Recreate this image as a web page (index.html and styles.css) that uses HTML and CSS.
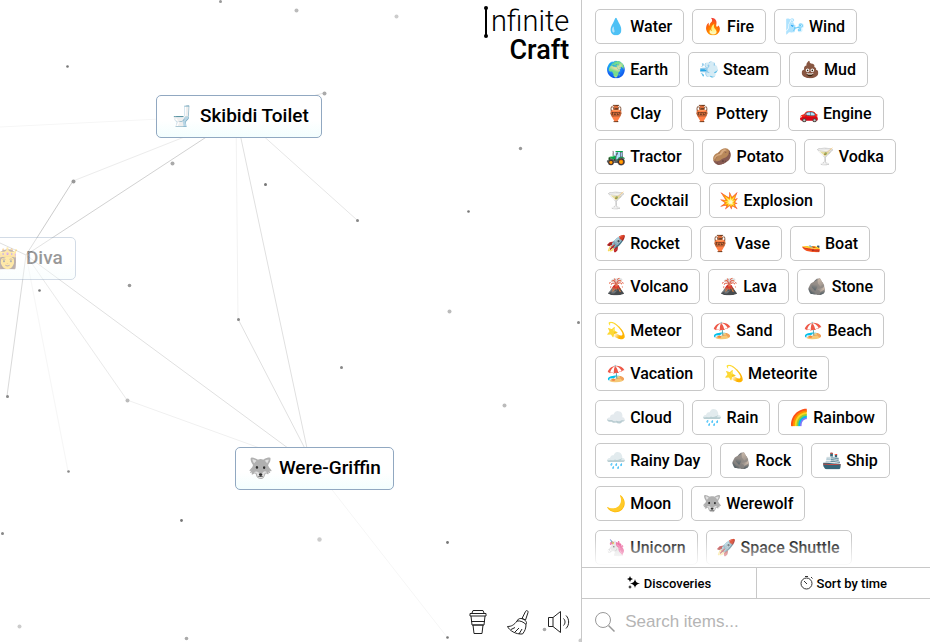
FILE: index.html
```html
<!DOCTYPE html>
<html lang="en">
<head>
    <meta charset="UTF-8">
    <meta name="viewport" content="width=device-width, initial-scale=1.0">
    <title>Infinite Craft</title>
    <link rel="stylesheet" href="styles.css">
</head>
<body>
    <div class="container">
        <main class="board">
            <svg class="particles" aria-hidden="true">
                <g id="lines"></g>
                <g id="dots" transform="translate(.5 .5)"></g>
            </svg>

            <h1 class="logo" aria-label="Infinite Craft">
                <span class="logo-top">
                    <svg class="logo-i" width="6" height="34" viewBox="0 0 6 34">
                        <path d="M3 3v28" stroke="#000" stroke-width="2"/>
                        <circle cx="3" cy="3" r="2"/>
                        <circle cx="3" cy="31" r="2"/>
                    </svg>nfinite
                </span>
                <span class="logo-bottom">Craft</span>
            </h1>

            <button type="button" class="instance skibidi"><span class="emoji">🚽</span>Skibidi Toilet</button>
            <button type="button" class="instance diva"><span class="emoji">👸</span>Diva</button>
            <button type="button" class="instance griffin"><span class="emoji">🐺</span>Were-Griffin</button>

            <div class="tools">
                <button type="button" class="tool" aria-label="Buy a coffee">
                    <svg width="24" height="26" viewBox="0 0 24 26">
                        <path d="M6 4l1-2.500h10l1 2.500M4 4.500h16v2.500H4zM5 7l1 9h12l1-9M5 12.500h14M6.500 16h11M7 16l1 8.500h8l1-8.500"/>
                    </svg>
                </button>
                <button type="button" class="tool" aria-label="Clear board">
                    <svg width="24" height="26" viewBox="0 0 24 26">
                        <path d="M19.500 2.500c.5-1.500 3-1 2.500 1l-2.500 7.500-3.500-1.500zM12.500 10c3-1.500 7 .5 8 3.500l-.5 2c-2.500-2.500-5.500-4-9-3.500zM11 12c-3 4-5.500 5.500-9.500 5.500 2 4 8 8 15 7.500 2.500-3 3.500-6 3.500-9.500M5 20.500l4-2M9 23l4-4M13 25l3-5"/>
                    </svg>
                </button>
                <button type="button" class="tool" aria-label="Toggle sound">
                    <svg width="24" height="26" viewBox="0 0 24 26">
                        <path d="M2.500 8.500H7v9H2.500zM7 8.500l7.500-6v21L7 17.500M17.500 9.500c2 2 2 5 0 7M20 6.500c3.500 3.500 3.500 9.500 0 13"/>
                    </svg>
                </button>
            </div>
        </main>

        <aside class="sidebar">
            <div class="items" id="items"></div>

            <div class="sidebar-controls">
                <button type="button" class="control">
                    <svg width="13" height="14" viewBox="0 0 13 14">
                        <path d="M8 3q.5 4 5 4.500-4.500.5-5 4.500-.5-4-5-4.500 4.500-.5 5-4.500zM3 0q.3 2.700 3 3-2.700.3-3 3-.3-2.700-3-3 2.700-.3 3-3zM3 9q.2 1.800 2 2-1.800.2-2 2-.2-1.800-2-2 1.800-.2 2-2z"/>
                    </svg>
                    Discoveries
                </button>
                <button type="button" class="control">
                    <svg width="13" height="14" viewBox="0 0 13 14" fill="none" stroke="#333">
                        <circle cx="6.500" cy="7.500" r="5.500"/>
                        <path d="M4 5l3 3M5 .5h3M11 1l1.500 1.500"/>
                    </svg>
                    Sort by time
                </button>
            </div>

            <label class="search">
                <svg width="20" height="20" viewBox="0 0 20 20" fill="none" stroke="#999">
                    <circle cx="8" cy="8" r="7.500"/>
                    <path d="M13.500 13.500l6 6" stroke-width="1.500"/>
                </svg>
                <input type="text" class="search-input" placeholder="Search items..." aria-label="Search items">
            </label>
        </aside>
    </div>

    <script src="script.js"></script>
</body>
</html>
```
FILE: styles.css
```css
* {
    box-sizing: border-box;
}
body {
    margin: 0;
    font-family: Roboto, "Noto Color Emoji", sans-serif;
    color: #000;
    background-color: #fff;
}
button {
    font-family: inherit;
    font-weight: 500;
    color: inherit;
    cursor: pointer;
}
.container {
    display: grid;
    grid-template-columns: minmax(0, 5fr) minmax(0, 3fr);
    height: 100vh;
}

/* board */
.board {
    position: relative;
    display: flex;
    flex-direction: column;
    justify-content: space-between;
    align-items: flex-end;
    overflow: hidden;
}
.particles {
    position: absolute;
    top: 0;
    left: 0;
    width: 100%;
    height: 100%;
}
.logo {
    display: flex;
    flex-direction: column;
    align-items: flex-end;
    margin: 5px 12px 0 0;
}
.logo-top {
    display: flex;
    gap: 2px;
    height: 32px;
    font-size: 29px;
    font-weight: 300;
    line-height: 32px;
}
.logo-bottom {
    font-size: 27px;
    font-weight: 500;
    line-height: 27px;
}
.instance {
    position: absolute;
    display: flex;
    align-items: center;
    gap: 6px;
    height: 43px;
    padding: 0 12px 2px;
    font-size: 19px;
    white-space: nowrap;
    background: linear-gradient(#fff 60%, #f3fefe);
    border: 1px solid #91a8c1;
    border-radius: 5px;
}
.instance .emoji {
    font-size: 20px;
}
.skibidi {
    top: 95px;
    left: 156px;
}
.diva {
    top: 237px;
    left: -18px;
    opacity: 0.4;
}
.griffin {
    top: 447px;
    left: 235px;
}
.tools {
    display: flex;
    gap: 16px;
    padding: 0 11px 7px 0;
}
.tool {
    display: flex;
    padding: 0;
    background: none;
    border: none;
}
.tool svg {
    fill: none;
    stroke: #222;
}

/* sidebar */
.sidebar {
    display: flex;
    flex-direction: column;
    min-height: 0;
    border-left: 1px solid #c8c8c8;
}
.items {
    position: relative;
    display: flex;
    flex: 1;
    flex-wrap: wrap;
    align-content: space-between;
    column-gap: 8px;
    min-height: 0;
    padding: 9px 20px 2px 13px;
    overflow: hidden;
}
.items::after {
    content: "";
    position: absolute;
    right: 0;
    bottom: 0;
    left: 0;
    height: 30px;
    background: linear-gradient(transparent, #fff);
}
.item {
    display: flex;
    align-items: center;
    gap: 4px;
    height: 35px;
    padding: 0 11px 0 10px;
    font-size: 16px;
    background-color: #fff;
    border: 1px solid #c8c8c8;
    border-radius: 5px;
}
.sidebar-controls {
    display: flex;
    border-top: 1px solid #c8c8c8;
    border-bottom: 1px solid #c8c8c8;
}
.control {
    display: flex;
    flex: 1;
    align-items: center;
    justify-content: center;
    gap: 4px;
    height: 30px;
    padding: 0;
    font-size: 13px;
    background: none;
    border: none;
}
.control + .control {
    border-left: 1px solid #c8c8c8;
}
.search {
    display: flex;
    align-items: center;
    gap: 10px;
    height: 43px;
    padding: 3px 13px 0;
}
.search-input {
    flex: 1;
    min-width: 0;
    padding: 0;
    font-family: "Liberation Sans", Arial, sans-serif;
    font-size: 17px;
    border: none;
    outline: none;
}
.search-input::placeholder {
    color: #b5b5b5;
}
```
FILE: script.js
```js
const items = [
    ['💧', 'Water'], ['🔥', 'Fire'], ['🌬️', 'Wind'],
    ['🌍', 'Earth'], ['💨', 'Steam'], ['💩', 'Mud'],
    ['🏺', 'Clay'], ['🏺', 'Pottery'], ['🚗', 'Engine'],
    ['🚜', 'Tractor'], ['🥔', 'Potato'], ['🍸', 'Vodka'],
    ['🍸', 'Cocktail'], ['💥', 'Explosion'],
    ['🚀', 'Rocket'], ['🏺', 'Vase'], ['🚤', 'Boat'],
    ['🌋', 'Volcano'], ['🌋', 'Lava'], ['🪨', 'Stone'],
    ['💫', 'Meteor'], ['🏖️', 'Sand'], ['🏖️', 'Beach'],
    ['🏖️', 'Vacation'], ['💫', 'Meteorite'],
    ['☁️', 'Cloud'], ['🌧️', 'Rain'], ['🌈', 'Rainbow'],
    ['🌧️', 'Rainy Day'], ['🪨', 'Rock'], ['🚢', 'Ship'],
    ['🌙', 'Moon'], ['🐺', 'Werewolf'],
    ['🦄', 'Unicorn'], ['🚀', 'Space Shuttle']
];

// x, y, radius, grey
const dots = [
    [220, 1, 1.5, '#999'], [296, 10, 2, '#bbb'], [396, 16, 2, '#ccc'],
    [67, 66, 1.3, '#777'], [324, 93, 2, '#aaa'], [172, 163, 2, '#aaa'],
    [73, 181, 2, '#999'], [265, 184, 1.5, '#777'], [520, 148, 1.7, '#999'],
    [468, 211, 1.3, '#777'], [357, 220, 1.5, '#888'], [39, 290, 1.3, '#777'],
    [129, 285, 1.8, '#999'], [449, 311, 2, '#bbb'], [238, 319, 1.5, '#888'],
    [578, 322, 1.5, '#888'], [341, 367, 1.5, '#888'], [7, 396, 1.5, '#888'],
    [127, 400, 2, '#bbb'], [504, 405, 2, '#bbb'], [68, 471, 1.3, '#888'],
    [181, 520, 1.4, '#777'], [2, 533, 1.5, '#888'], [319, 539, 2.2, '#ccc'],
    [447, 542, 1.4, '#777'], [19, 626, 2, '#ccc'], [186, 638, 1.8, '#aaa'],
    [447, 637, 1.3, '#777'], [544, 629, 1.8, '#aaa'], [580, 640, 2, '#ccc']
];

// x1, y1, x2, y2, grey
const lines = [
    [0, 127, 240, 115, '#f6f6f6'], [73, 181, 240, 115, '#ececec'],
    [26, 255, 73, 181, '#ccc'], [26, 255, 240, 115, '#d2d2d2'],
    [240, 115, 357, 220, '#e6e6e6'], [236, 115, 238, 319, '#f2f2f2'],
    [236, 115, 308, 453, '#e0e0e0'], [238, 319, 315, 468, '#e0e0e0'],
    [26, 255, 315, 468, '#e0e0e0'], [26, 255, 127, 400, '#eaeaea'],
    [127, 400, 315, 468, '#f0f0f0'], [26, 255, 68, 471, '#f6f6f6'],
    [26, 255, 7, 396, '#dadada'], [0, 243, 26, 255, '#ccc'],
    [315, 468, 447, 637, '#f6f6f6'], [240, 115, 324, 93, '#e4e4e4']
];

const svgNS = 'http://www.w3.org/2000/svg';

lines.forEach(([x1, y1, x2, y2, color]) => {
    const line = document.createElementNS(svgNS, 'line');
    line.setAttribute('x1', x1);
    line.setAttribute('y1', y1);
    line.setAttribute('x2', x2);
    line.setAttribute('y2', y2);
    line.setAttribute('stroke', color);
    document.getElementById('lines').appendChild(line);
});

dots.forEach(([x, y, r, color]) => {
    const dot = document.createElementNS(svgNS, 'circle');
    dot.setAttribute('cx', x);
    dot.setAttribute('cy', y);
    dot.setAttribute('r', r);
    dot.setAttribute('fill', color);
    document.getElementById('dots').appendChild(dot);
});

items.forEach(([emoji, text]) => {
    const item = document.createElement('button');
    item.type = 'button';
    item.className = 'item';
    const icon = document.createElement('span');
    icon.className = 'emoji';
    icon.textContent = emoji;
    item.append(icon, text);
    document.getElementById('items').appendChild(item);
});
```
